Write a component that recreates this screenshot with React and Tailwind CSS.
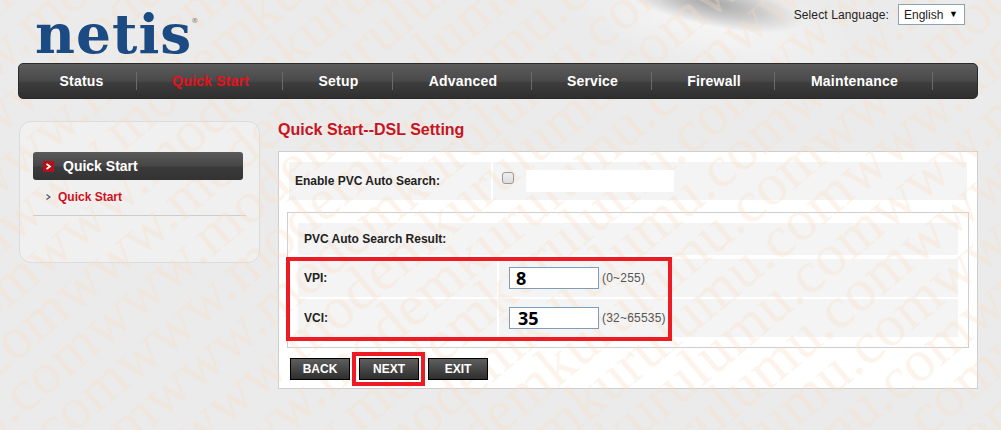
const ARIAL = "font-['Liberation_Sans',Arial,sans-serif]";

const NAV = [
  { label: "Status", w: "w-[112px]" },
  { label: "Quick Start", w: "w-[146px]", active: true },
  { label: "Setup", w: "w-[110px]" },
  { label: "Advanced", w: "w-[139px]" },
  { label: "Service", w: "w-[120px]" },
  { label: "Firewall", w: "w-[123px]" },
  { label: "Maintenance", w: "w-[158px]" },
];

function Watermark() {
  return (
    <svg aria-hidden="true" width="1001" height="430" className="pointer-events-none absolute left-0 top-0 z-10">
      <defs>
        <pattern
          id="wm"
          patternUnits="userSpaceOnUse"
          width="677"
          height="46"
          patternTransform="translate(104.6 351.5) rotate(-40)"
        >
          <text x="0" y="43" textLength="677" fontFamily="'Liberation Serif', serif" fontSize="60" fill="#f7dcc5">
            www.modemkurulumu.com
          </text>
        </pattern>
      </defs>
      <rect width="1001" height="430" fill="url(#wm)" opacity="0.34" />
    </svg>
  );
}

function Nav() {
  return (
    <nav className="relative z-20 mx-[18px] flex h-[36px] w-[960px] items-center rounded-[5px] border border-[#2b2b2b] bg-[linear-gradient(#5c5c5c,#494949_50%,#3d3d3d_55%,#2f2f2f)] pl-[6px]">
      {NAV.map((n) => (
        <a
          key={n.label}
          className={`flex h-[18px] items-center justify-center border-r border-[#6a6a6a] pl-[2px] text-[14px] font-bold tracking-[0.2px] ${n.w} ${
            n.active ? "text-[#e8101c]" : "text-white"
          }`}
        >
          {n.label}
        </a>
      ))}
    </nav>
  );
}

function Sidebar() {
  return (
    <aside className="h-[142px] w-[241px] rounded-[12px] border border-[#dcdcdc] bg-[#f0f0f0] px-[13px] pt-[30px]">
      <div className="relative z-20 flex h-[28px] w-[210px] items-center rounded-[3px] bg-[linear-gradient(#5a5a5a,#464646_50%,#3a3a3a_55%,#333333)] pl-[10px]">
        <span className="flex h-[11px] w-[11px] items-center justify-center bg-[#b5101a]">
          <svg width="7" height="7" viewBox="0 0 7 7" fill="none">
            <path d="M1.5 1 L5 3.5 L1.5 6" stroke="white" strokeWidth="1.7" />
          </svg>
        </span>
        <span className="ml-[9px] text-[14px] font-bold text-white">Quick Start</span>
      </div>
      <div className="relative z-20 flex h-[33px] w-[213px] items-center pl-[13px]">
        <svg width="5" height="6" viewBox="0 0 5 6" fill="none">
          <path d="M0.5 0.5 L4 3 L0.5 5.5" stroke="#555555" strokeWidth="1.2" />
        </svg>
        <span className="ml-[7px] text-[12px] font-bold text-[#d0101c]">Quick Start</span>
      </div>
      <div className="mt-[2px] h-px w-[213px] bg-[#cccccc]" />
    </aside>
  );
}

function NumberRow({ label, value, hint, pad }) {
  return (
    <div className="flex h-[38px] gap-[2px]">
      <div className="flex w-[199px] items-center bg-[#f4f4f4] pl-[6px] text-[12px] font-bold text-[#222222]">
        <span className="relative z-20">{label}</span>
      </div>
      <div className="flex flex-1 items-center bg-[#f4f4f4] pl-[10px]">
        <input
          readOnly
          value={value}
          className={`relative z-20 h-[22px] w-[90px] border border-[#7f9db9] bg-white font-['Noto_Sans',sans-serif] text-[18px] font-bold leading-none text-black outline-none ${pad}`}
        />
        <span className="relative z-20 ml-[3px] text-[12px] tracking-[0.2px] text-[#555555]">{hint}</span>
      </div>
    </div>
  );
}

function Btn({ children }) {
  return (
    <button className="relative z-20 h-[22px] w-[60px] border border-black bg-[linear-gradient(#5e5e5e,#2e2e2e)] text-[12px] font-bold text-white">
      {children}
    </button>
  );
}

function Panel() {
  return (
    <section className="relative h-[238px] w-[700px] border border-[#cfcfcf] bg-white">
      <div className="mx-[10px] mt-[10px] flex h-[38px] w-[678px] gap-[2px]">
        <div className="flex w-[202px] items-center bg-[#f4f4f4] pl-[6px] text-[12px] font-bold text-[#222222]">
          <span className="relative z-20">Enable PVC Auto Search:</span>
        </div>
        <div className="flex flex-1 items-start bg-[#f4f4f4] pl-[9px] pt-[8px]">
          <span className="relative z-20 mt-[2px] h-[12px] w-[12px] rounded-[3px] border border-[#999999] bg-[linear-gradient(#eeeeee,#dddddd)]" />
          <span className="relative z-20 ml-[12px] h-[22px] w-[148px] bg-white" />
        </div>
      </div>
      <div className="mx-[8px] mt-[12px] h-[136px] w-[682px] border border-[#cfcfcf] px-[10px] pt-[10px]">
        <div className="flex h-[32px] w-[660px] items-center bg-[#f4f4f4] pl-[6px] text-[12px] font-bold text-[#222222]">
          <span className="relative z-20">PVC Auto Search Result:</span>
        </div>
        <div className="mt-[4px] flex w-[660px] flex-col gap-[2px]">
          <NumberRow label="VPI:" value="8" hint="(0~255)" pad="pl-[6px]" />
          <NumberRow label="VCI:" value="35" hint="(32~65535)" pad="pl-[8px]" />
        </div>
      </div>
      <div className="ml-[11px] mt-[10px] flex gap-[9px]">
        <Btn>BACK</Btn>
        <Btn>NEXT</Btn>
        <Btn>EXIT</Btn>
      </div>
      <div className="absolute left-[7px] top-[105px] z-20 h-[84px] w-[386px] border-[4px] border-[#ed1c24]" />
      <div className="absolute left-[73px] top-[200px] z-20 h-[34px] w-[73px] border-[4px] border-[#ed1c24]" />
    </section>
  );
}

export default function App() {
  return (
    <div className={`relative h-[430px] w-[1001px] overflow-hidden bg-[#ebebeb] ${ARIAL}`}>
      <div className="absolute left-[560px] top-[-30px] h-[100px] w-[300px] rotate-[14deg] rounded-full bg-[radial-gradient(closest-side,#f6f6f6,transparent)]" />
      <div className="absolute left-[615px] top-[-22px] h-[48px] w-[190px] rotate-[12deg] rounded-full bg-[radial-gradient(closest-side,#a6a6a6,#cdcdcd_55%,transparent)]" />
      <header className="flex h-[63px] justify-between pl-[35px] pr-[36px]">
        <div className="relative z-20 flex h-[57px] items-start pt-[4px] font-['DejaVu_Serif',serif] text-[55px] font-bold leading-[60px] tracking-[1px] text-[#1c4a82]">
          netis
          <span className="ml-[-1px] mt-[14px] text-[7px] font-normal leading-none tracking-normal text-[#777777]">®</span>
        </div>
        <div className="relative z-20 flex h-[28px] items-center gap-[9px] pt-[1px] text-[12px] text-[#222222]">
          <span className="tracking-[0.12px]">Select Language:</span>
          <span className="flex h-[21px] w-[67px] items-center justify-between border border-[#8ca3b5] bg-white pl-[5px] pr-[6px]">
            English
            <span className="text-[9px] text-black">▼</span>
          </span>
        </div>
      </header>
      <Nav />
      <main className="ml-[19px] mt-[22px] flex gap-[18px]">
        <Sidebar />
        <div>
          <h1 className="relative z-20 flex h-[30px] items-start pt-[0px] text-[16px] font-bold leading-[18px] text-[#c8141e]">
            Quick Start--DSL Setting
          </h1>
          <Panel />
        </div>
      </main>
      <Watermark />
    </div>
  );
}
